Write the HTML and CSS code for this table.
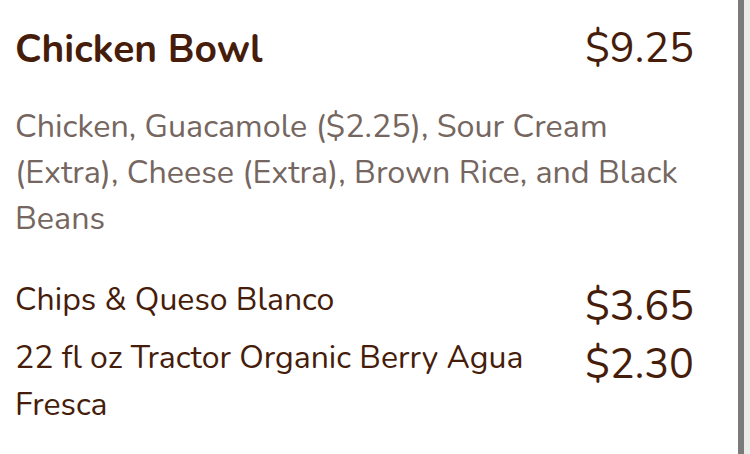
FILE: index.html
```html
<!DOCTYPE html>
<html>
<head>
<meta charset="utf-8">
<link rel="stylesheet" href="styles.css">
</head>
<body>
<div class="page">
  <main class="order">
    <div class="bowl-head">
      <h1 class="bowl-title">Chicken Bowl</h1>
      <span class="price head-price">$9.25</span>
    </div>
    <p class="bowl-desc">Chicken, Guacamole ($2.25), Sour Cream (Extra), Cheese (Extra), Brown Rice, and Black Beans</p>
    <ul class="extras">
      <li class="extra">
        <span class="extra-name">Chips &amp; Queso Blanco</span>
        <span class="price extra-price">$3.65</span>
      </li>
      <li class="extra">
        <span class="extra-name">22 fl oz Tractor Organic Berry Agua Fresca</span>
        <span class="price extra-price">$2.30</span>
      </li>
    </ul>
  </main>
  <div class="rail"></div>
</div>
</body>
</html>
```
FILE: styles.css
```css
html, body {
  margin: 0;
  padding: 0;
  height: 100%;
}
body {
  font-family: "Nunito", "Lato", "Open Sans", sans-serif;
  background: #ffffff;
}
.page {
  display: flex;
  height: 100%;
}
.order {
  flex: 1;
  padding: 26px 44px 0 15px;
  background: #ffffff;
  border-right: 6px solid #7a7a7a;
}
.rail {
  width: 6px;
  background: #ebebe8;
}
.bowl-head {
  display: flex;
  justify-content: space-between;
  align-items: flex-start;
}
.bowl-title {
  margin: 0;
  font-size: 39px;
  font-weight: 700;
  line-height: 48px;
  color: #461c0a;
}
.price {
  font-size: 41.5px;
  color: #461c0a;
  white-space: nowrap;
}
.head-price {
  line-height: 46px;
}
.extra-price {
  padding-top: 4px;
  line-height: 54px;
}
.bowl-desc {
  margin: 29px 0 0;
  font-size: 32.3px;
  line-height: 46px;
  color: #75665f;
}
.extras {
  list-style: none;
  margin: 35px 0 0;
  padding: 0;
}
.extra {
  display: flex;
  justify-content: space-between;
  align-items: flex-start;
  gap: 56px;
}
.extra-name {
  font-size: 32px;
  line-height: 47px;
  color: #461c0a;
}
```
